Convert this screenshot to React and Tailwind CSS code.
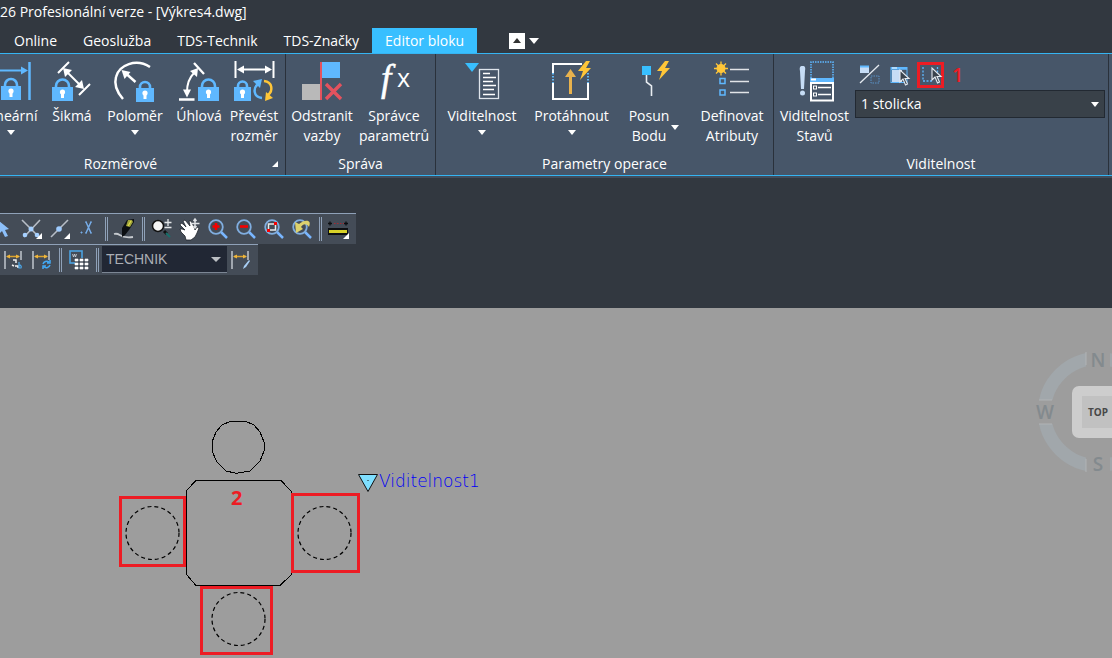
import React from "react";

const tabs = ["Online", "Geoslužba", "TDS-Technik", "TDS-Značky", "Editor bloku"];

function Lock({ x, y, w = 20 }) {
  const c = x + w / 2;
  const r = w / 2 - 4;
  return (
    <g>
      <path d={`M${c - r} ${y + 9}v-2a${r} ${r} 0 0 1 ${2 * r} 0v2`} fill="none" stroke="#5fb8ff" strokeWidth="2.6" />
      <rect x={x} y={y + 8} width={w} height="14" fill="#5fb8ff" />
      <circle cx={c} cy={y + 13} r="2.6" fill="#fff" />
      <rect x={c - 1.5} y={y + 14} width="3" height="5" fill="#fff" />
    </g>
  );
}

function Icon({ box, children }) {
  return (
    <svg viewBox={box} className="h-[42px] w-[42px] shrink-0 self-center overflow-visible" fill="none" aria-hidden="true">
      {children}
    </svg>
  );
}

const LinearIcon = () => (
  <Icon box="-10 61 42 42">
    <path d="M-10 70.500H22" stroke="#5fb8ff" strokeWidth="2" />
    <path d="M21 66.500v8l7-4z" fill="#5fb8ff" />
    <path d="M29.500 62v38" stroke="#5fb8ff" strokeWidth="2.500" />
    <Lock x={1} y={78} />
  </Icon>
);
const AlignedIcon = () => (
  <Icon box="51 61 42 42">
    <path d="M58 73 69 62M79 95l11-11" stroke="#fff" strokeWidth="2" />
    <path d="m66 71 15 15" stroke="#fff" strokeWidth="2" />
    <path d="m63 68 9 2-7 7zM84 89l-9-2 7-7z" fill="#fff" />
    <Lock x={52} y={79} w={21} />
  </Icon>
);
const RadiusIcon = () => (
  <Icon box="114 61 42 42">
    <path d="M150 67C136 58 119 65 116 77c-2 7 0 14 7 22" stroke="#fff" strokeWidth="2.500" />
    <path d="m135.500 82-9-8" stroke="#fff" strokeWidth="2.500" />
    <path d="m121.500 70 9 2-6 7z" fill="#fff" />
    <Lock x={136} y={80} w={18} />
  </Icon>
);
const AngularIcon = () => (
  <Icon box="178 61 42 42">
    <path d="m194 63 10 11M179 99.500h15.500" stroke="#fff" strokeWidth="2.300" />
    <path d="M187 92c0-8 2-14 7-19" stroke="#fff" strokeWidth="2" />
    <path d="M183 89.500h8l-4 8zM190 71l8-3-1 9z" fill="#fff" />
    <Lock x={198} y={79} w={21} />
  </Icon>
);
const ConvertIcon = () => (
  <Icon box="234 61 42 42">
    <path d="M236.500 61v17M274.500 61v17M241 69.500h29" stroke="#fff" strokeWidth="2" />
    <path d="M238 69.500l7-4v8zM273 69.500l-7-4v8z" fill="#fff" />
    <Lock x={235} y={79} w={17} />
    <path d="M263 98c-9-1-9-10-4-14" stroke="#5fb8ff" strokeWidth="2.500" />
    <path d="m254 81 9-2-2 9z" fill="#5fb8ff" />
    <path d="M265 81c9 1 9 10 4 14" stroke="#ffc638" strokeWidth="2.500" />
    <path d="m274 98-8 3 1-9z" fill="#ffc638" />
  </Icon>
);
const RemoveIcon = () => (
  <Icon box="301 61 42 42">
    <rect x="302" y="84" width="19" height="16" fill="#b9b9b9" />
    <rect x="322" y="62" width="18" height="16" fill="#5fb8ff" />
    <path d="M321 62v38" stroke="#e4525e" strokeWidth="2" />
    <path d="m326 84 15 15M341 84l-15 15" stroke="#e4525e" strokeWidth="3.400" />
  </Icon>
);
const FxIcon = () => (
  <Icon box="373 61 42 42">
    <text x="381" y="91" fontSize="37" fontStyle="italic" fill="#fff" stroke="#fff" strokeWidth=".5" fontFamily="Liberation Serif, serif">f</text>
    <text x="397" y="87" fontSize="25" fill="#fff" fontFamily="Open Sans, sans-serif">x</text>
  </Icon>
);
const VisibilityIcon = () => (
  <Icon box="461 61 42 42">
    <path d="M465 63h14l-7 9z" fill="#38bfff" />
    <rect x="479.500" y="69.500" width="19" height="29" stroke="#dfe5ec" strokeWidth="1.300" />
    <path d="M483 73.500h7M483 77.500h13M483 81.500h10M483 85.500h13M483 89.500h11M483 94.500h12" stroke="#fff" strokeWidth="1.500" />
  </Icon>
);
const Bolt = ({ x, y }) => (
  <path transform={`translate(${x} ${y})`} d="M8 0 0 10h5L2 19 13 7H8l4-7z" fill="#ffc638" />
);
const StretchIcon = () => (
  <Icon box="551 61 42 42">
    <path d="M553 73v-9h29M553 83v16h35v-16" stroke="#fff" strokeWidth="2" />
    <path d="M553 73v10M588 73v10" stroke="#63b8f5" strokeWidth="2" strokeDasharray="1.500 1.500" />
    <path d="M570.500 94V75" stroke="#e8b24d" strokeWidth="3" />
    <path d="m565 77 5.500-8 5.500 8z" fill="#e8b24d" />
    <Bolt x={578} y={61} />
  </Icon>
);
const MoveIcon = () => (
  <Icon box="628 61 42 42">
    <rect x="642" y="66" width="9" height="9" fill="#38bfff" />
    <path d="M646.500 75v7l5 4v10" stroke="#e9edf2" strokeWidth="1.600" />
    <Bolt x={657} y={61} />
  </Icon>
);
const AttributesIcon = () => (
  <Icon box="711 61 42 42">
    <path d="M721 61.500v14M714 68.500h14M716 63.500l10 10M726 63.500l-10 10" stroke="#ffc638" strokeWidth="1.300" />
    <circle cx="721" cy="68.500" r="4.500" fill="#ffc638" />
    <rect x="720" y="78.500" width="5" height="5" stroke="#5fb8ff" strokeWidth="1.500" />
    <rect x="720" y="90" width="5" height="5" stroke="#5fb8ff" strokeWidth="1.500" />
    <path d="M730 69.500h19M730 81.500h19M730 92.500h19" stroke="#e1e4e8" strokeWidth="1.500" />
  </Icon>
);
const StatesIcon = () => (
  <Icon box="794 61 42 42">
    <path d="M802.500 66c3 0 3 2 2.500 5l-1 18h-3l-1-18c-.5-3-.5-5 2.500-5z" fill="#c6dcf5" />
    <circle cx="802.500" cy="93" r="2.500" fill="#c6dcf5" />
    <path d="M811 78V62h22v16" stroke="#5fb8ff" strokeWidth="1.500" strokeDasharray="1.500 1" />
    <path d="M810 78h24v5h-24z" fill="#5fb8ff" />
    <path d="M811 79.500h5" stroke="#fff" strokeWidth="2" />
    <rect x="811" y="83" width="22" height="17.500" stroke="#fff" strokeWidth="2" />
    <path d="M818 87.500h13M818 94.500h13" stroke="#fff" strokeWidth="1.600" />
    <rect x="813.500" y="86" width="3" height="3" stroke="#fff" />
    <rect x="813.500" y="93" width="3" height="3" stroke="#fff" />
  </Icon>
);

const Caret = () => (
  <svg viewBox="0 0 8 5" className="h-[5px] w-2 shrink-0" aria-hidden="true">
    <path d="M0 0h8L4 5z" fill="#fff" />
  </svg>
);

function BigButton({ icon, lines, width, caret, sideCaret }) {
  return (
    <button type="button" className={`flex shrink-0 flex-col items-center whitespace-nowrap ${width}`}>
      {icon}
      <span className="relative mt-[3px] block leading-5">
        {lines.map((l) => (
          <span key={l} className="block text-center">{l}</span>
        ))}
        {sideCaret && <span className="absolute -right-[10px] bottom-4 flex"><Caret /></span>}
      </span>
      {caret && <span className="mt-1 flex"><Caret /></span>}
    </button>
  );
}

function Panel({ title, className, launcher, children }) {
  return (
    <section className={`flex shrink-0 flex-col border-r border-[#2a313b] pt-[7px] ${className}`}>
      <div className="flex flex-1">{children}</div>
      <div className="relative pb-px text-center leading-5">
        {title}
        {launcher && (
          <svg viewBox="0 0 6 6" className="absolute right-[7px] bottom-2 h-[6px] w-[6px]" aria-hidden="true">
            <path d="M6 0v6H0z" fill="#fff" />
          </svg>
        )}
      </div>
    </section>
  );
}

const Cursor = ({ x, y }) => (
  <path transform={`translate(${x} ${y})`} d="M0 0v12l3-3 2.500 6 2-1-2.500-5.500h4z" fill="#39424d" stroke="#e5eaf0" strokeWidth="1.100" />
);

function SmallIcon({ box, label, className = "", children }) {
  return (
    <button type="button" aria-label={label} className={`flex h-[26px] w-[27px] items-center justify-center ${className}`}>
      <svg viewBox={box} className="h-5 w-5 shrink-0 overflow-visible" fill="none" aria-hidden="true">{children}</svg>
    </button>
  );
}

function Ribbon() {
  return (
    <div className="flex overflow-hidden border-y border-[#35b4f2] bg-[#475669] shadow-[0_2px_0_#414d5c]">
      <Panel title="Rozměrové" launcher className="-ml-11 h-[121px] w-[330px]">
        <div className="flex flex-1 justify-end pr-2">
          <BigButton icon={<LinearIcon />} lines={["Lineární"]} width="w-[60px]" caret />
          <BigButton icon={<AlignedIcon />} lines={["Šikmá"]} width="w-[62px]" />
          <BigButton icon={<RadiusIcon />} lines={["Poloměr"]} width="w-16" caret />
          <BigButton icon={<AngularIcon />} lines={["Úhlová"]} width="w-16" />
          <BigButton icon={<ConvertIcon />} lines={["Převést", "rozměr"]} width="w-[46px]" />
        </div>
      </Panel>
      <Panel title="Správa" className="w-[150px]">
        <BigButton icon={<RemoveIcon />} lines={["Odstranit", "vazby"]} width="w-[72px]" />
        <BigButton icon={<FxIcon />} lines={["Správce", "parametrů"]} width="w-[72px]" />
      </Panel>
      <Panel title="Parametry operace" className="w-[338px]">
        <BigButton icon={<VisibilityIcon />} lines={["Viditelnost"]} width="w-[92px]" caret />
        <BigButton icon={<StretchIcon />} lines={["Protáhnout"]} width="w-[87px]" caret />
        <BigButton icon={<MoveIcon />} lines={["Posun", "Bodu"]} width="w-[68px]" sideCaret />
        <div className="-mt-[3px] mb-[6px] ml-[7px] w-px bg-[#2a313b]" />
        <BigButton icon={<AttributesIcon />} lines={["Definovat", "Atributy"]} width="w-[84px]" />
      </Panel>
      <Panel title="Viditelnost" className="mr-[3px] min-w-[300px] grow">
        <BigButton icon={<StatesIcon />} lines={["Viditelnost", "Stavů"]} width="w-[81px]" />
        <div className="flex flex-1 flex-col gap-[2px] pt-px pr-[3px]">
          <div className="flex items-center gap-1">
            <SmallIcon box="858 63 20 20" label="Režim viditelnosti">
              <rect x="859" y="64" width="9" height="7" fill="#c6dcf5" />
              <path d="M859 64.500h9" stroke="#5fb8ff" strokeWidth="2" />
              <path d="m859 81 19-18" stroke="#e5eaf0" strokeWidth="1.300" />
              <rect x="870" y="74" width="8" height="7" stroke="#5b92c8" strokeDasharray="1.500 1" />
            </SmallIcon>
            <SmallIcon box="890 63 20 20" label="Zviditelnit">
              <rect x="891" y="65.500" width="16" height="15" fill="#475669" stroke="#5fb8ff" />
              <path d="M892 68h10v12h-10z" fill="#c6dcf5" />
              <path d="M891 66.500h16" stroke="#5fb8ff" strokeWidth="2.500" />
              <path d="M892 66h5" stroke="#fff" />
              <Cursor x={900} y={68} />
            </SmallIcon>
            <SmallIcon box="920 65 20 20" label="Zneviditelnit" className="border-[3px] border-[#ed1c24]">
              <path d="M922 67v14h10M936.500 67v12" stroke="#5fb8ff" strokeWidth="1.300" strokeDasharray="2 1.500" />
              <Cursor x={931} y={68} />
            </SmallIcon>
            <span className="pl-1 text-xl font-semibold leading-5 text-[#ed1c24]">1</span>
          </div>
          <label className="relative flex">
            <select aria-label="Stav viditelnosti" className="h-7 w-full appearance-none rounded-none border border-[#222932] bg-[#394149] px-[5px] text-sm text-white">
              <option>1 stolicka</option>
            </select>
            <span className="pointer-events-none absolute top-3 right-[6px] flex"><Caret /></span>
          </label>
        </div>
      </Panel>
    </div>
  );
}

function Tool({ label, children }) {
  return (
    <button type="button" aria-label={label} className="flex h-[30px] w-7 shrink-0 items-center justify-center">
      <svg viewBox="0 0 20 20" className="h-5 w-5 overflow-visible" fill="none" aria-hidden="true">{children}</svg>
    </button>
  );
}
const Grip = () => (
  <div className="flex w-[9px] shrink-0 justify-center py-[3px]"><div className="w-[3px] border-x border-[#8fa1b8]" /></div>
);
const Lens = ({ children }) => (
  <>
    <path d="m13 13 6 6" stroke="#79b6ff" strokeWidth="2.500" />
    <circle cx="8" cy="8" r="6.800" stroke="#80aee0" strokeWidth="1.800" />
    {children}
  </>
);
const Dim = ({ children }) => (
  <>
    <path d="M1 1v18M17 1v9" stroke="#b8bec6" strokeWidth="1.600" />
    <path d="M3 6.500h12" stroke="#dba32e" strokeWidth="1.500" />
    <path d="m2 6.500 4-2v4zM16 6.500l-4-2v4z" fill="#f0b63b" />
    {children}
  </>
);
const Corner = () => <path d="M20 14v6h-6z" fill="#fff" />;

function Toolbars() {
  return (
    <div className="flex flex-col items-start pt-[37px] pb-[33px]">
      <div className="flex overflow-hidden border-t border-[#8fa1b8] bg-[#444c57] pr-[3px]">
        <div className="-ml-[10px] flex">
          <Tool label="Výběr"><path d="m5 2 10 8-4 1 3 6-3 1-3-6-3 3z" fill="#8dc0fa" /></Tool>
        </div>
        <Tool label="Průsečík">
          <path d="m0 1 17 17M18 1 2 18" stroke="#b7bdc6" strokeWidth="1.600" />
          <circle cx="9" cy="10" r="2.500" fill="#a6d0ff" /><circle cx="3" cy="16" r="2.300" fill="#a6d0ff" /><circle cx="15" cy="16" r="2.300" fill="#a6d0ff" /><Corner />
        </Tool>
        <Tool label="Střed"><path d="M1 18 18 1" stroke="#b7bdc6" strokeWidth="1.600" /><circle cx="9" cy="10" r="2.800" fill="#9ecbff" /><Corner /></Tool>
        <Tool label="Filtr X"><path d="m8 3 5 11M13 3 8 14" stroke="#77ade8" strokeWidth="1.500" /><path d="M3 13h1v1H3zM7 3h2M12 3h2M7 14h2M12 14h2" fill="#77ade8" stroke="#77ade8" /></Tool>
        <Grip />
        <Tool label="Kreslit">
          <path d="M-1 15c7-2 4 5 19 3" stroke="#c5c9ce" strokeWidth="1.800" />
          <path d="m12 1 7-1v3l-5 8-4 5-3 2V9z" fill="#0c0f12" />
          <path d="m13 1 4 0 1 2-3 5-4-1z" fill="#9da33c" />
          <path d="m13 7 3-5" stroke="#e6dd4a" strokeWidth="1.200" />
        </Tool>
        <Grip />
        <Tool label="Zoom"><path d="m12 12 3 3" stroke="#111" strokeWidth="3" /><path d="m14 14 4 4" stroke="#176f6b" strokeWidth="2" /><circle cx="6" cy="7" r="5.500" fill="#f5f5f5" stroke="#111" strokeWidth="1.500" /><path d="M16 0v7M12.500 3.500h7M12.500 8.500h7" stroke="#e3e5e8" strokeWidth="1.300" /></Tool>
        <Tool label="Posun">
          <path d="m5 17-4-4-1-3 2 0 3 1L0 6l1-2 2 1 3 3-3-6 2-1 5 6-1-5 2 0 3 6 1 3 2-3 2 1-2 5-2 4-4 3-5 0z" fill="#fff" stroke="#20252b" strokeWidth=".8" />
          <path d="M15 0v9M10.500 4.500h9M13.500 2l1.500-2 1.500 2M13.500 7l1.500 2 1.500-2" stroke="#dfe2e5" strokeWidth="1.400" />
        </Tool>
        <Tool label="Přiblížit"><Lens><path d="M4.500 7.500h7M8 4v7" stroke="#f50000" strokeWidth="2.600" /></Lens></Tool>
        <Tool label="Oddálit"><Lens><path d="M4 7.500h8" stroke="#f50000" strokeWidth="2.600" /></Lens></Tool>
        <Tool label="Zoom okno"><Lens><rect x="4.500" y="5" width="7" height="6" stroke="#e8eaec" strokeWidth="1.500" /><path d="M10 3h3v3h-3zM3 10h3v3H3z" fill="#f50000" /></Lens></Tool>
        <Tool label="Zoom předchozí"><Lens><path d="m3 3 1 11 7-4-2-2c3-4 6-3 8 0 2-5 0-7-4-6-3 0-4 2-6 3z" fill="#ddd26d" /></Lens></Tool>
        <Grip />
        <Tool label="Měřit"><path d="M-1 4.500h4M15 4.500h4M1 2.500v4M17 2.500v4" stroke="#0b0d10" strokeWidth="1.300" /><path d="M5 4.500h10" stroke="#a52a32" strokeDasharray="1.500 1.500" /><rect x="-1" y="9" width="20" height="7" fill="#0e1012" /><rect x="0" y="11" width="18" height="3" fill="#d8d228" /><Corner /></Tool>
      </div>
      <div className="flex border-t border-[#8fa1b8] bg-[#444c57] pr-[3px]">
        <Tool label="Upravit text kóty"><Dim><path d="M9 10h3v3M8 15l2 1M11 16h3v2" stroke="#f0f0f0" strokeWidth="1.500" /><path d="M15 12v6h2a2 2 0 0 0-2-3" stroke="#4aa7ea" strokeWidth="1.200" /></Dim></Tool>
        <Tool label="Aktualizovat kótu"><Dim><path d="M11 14a4 4 0 0 1 6-2M18 15a4 4 0 0 1-6 2M18 10v3h-3M11 19v-3h3" stroke="#42a9f5" strokeWidth="1.500" /></Dim></Tool>
        <Grip />
        <Tool label="Tabulka"><rect x="1" y="1" width="12" height="12" stroke="#4ca2e0" strokeWidth="1.600" /><path d="m3.500 4 1 3 1-3 1 3 1-3" stroke="#cfd5dd" strokeWidth=".8" /><path d="M6 8h13v11H6z" fill="#444c57" /><path d="M6 9h3v2H6zM11 9h3v2h-3zM16 9h3v2h-3zM6 13h3v2H6zM11 13h3v2h-3zM16 13h3v2h-3zM6 17h3v2H6zM11 17h3v2h-3zM16 17h3v2h-3z" fill="#fff" stroke="#fff" strokeWidth=".6" /></Tool>
        <Grip />
        <label className="relative flex pt-px pb-[2px]">
          <select aria-label="Kótovací styl" className="w-[125px] appearance-none rounded-none border-b border-[#7c8694] bg-[#212734] px-1 font-['Liberation_Sans',sans-serif] text-sm text-[#aaaeb4]">
            <option>TECHNIK</option>
          </select>
          <svg viewBox="0 0 10 5" className="pointer-events-none absolute top-3 right-[6px] h-[5px] w-[10px]" aria-hidden="true"><path d="M0 0h10L5 5z" fill="#bcbfc3" /></svg>
        </label>
        <Tool label="Styl kóty"><Dim><path d="m18 10-5 6-1 3 3-2 4-6z" fill="#a8cff5" /></Dim></Tool>
      </div>
    </div>
  );
}

function Canvas() {
  return (
    <main className="relative min-h-[350px] flex-1 overflow-hidden bg-[#9d9d9d]">
      <svg viewBox="0 308 500 350" className="absolute top-0 left-0 h-[350px] w-[500px]" fill="none">
        <g stroke="#000" shapeRendering="crispEdges">
          <path d="M231 421h14l9 4 6 7 4 10v9l-4 10-10 10-12 2h-3l-9-2-9-9-5-11v-9l4-10 6-7z" />
          <path d="M196 480.500h85l10.500 11v83l-11.500 11h-84l-9.500-11v-84z" />
        </g>
        <g stroke="#000" strokeWidth="1.200" strokeDasharray="4 3">
          <circle cx="152.500" cy="533" r="26.500" />
          <circle cx="324.500" cy="533" r="26.500" />
          <circle cx="238.500" cy="619" r="26.500" />
        </g>
        <g stroke="#ed1c24" strokeWidth="3">
          <rect x="120.500" y="497.500" width="64" height="68" />
          <rect x="292.500" y="494.500" width="66" height="77" />
          <rect x="201.500" y="587.500" width="70" height="66" />
        </g>
        <path d="M358.500 474.500h19l-9.500 17z" fill="#7fdfff" stroke="#111" />
        <path d="M367.500 480h1v1h-1z" fill="#111" />
        <text x="379" y="487" fontSize="17" fontWeight="200" fill="#0000f5" fontFamily="DejaVu Sans, sans-serif">Viditelnost1</text>
        <text x="231" y="505" fontSize="20" fontWeight="700" fill="#ed1c24" fontFamily="Open Sans, sans-serif">2</text>
      </svg>
      <svg viewBox="1012 338 100 150" className="absolute top-[30px] right-0 h-[150px] w-[100px]" fill="none">
        <circle cx="1098" cy="412" r="53.500" stroke="#a1a7ab" strokeWidth="13" />
        <path d="M1086 345h24v40h-24zM1086 439h24v40h-24zM1030 400h30v24h-30z" fill="#9d9d9d" />
        <path d="M1039 400h13M1039 424h13M1086 352v13M1086 459v13" stroke="#b0b3b5" />
        <g fill="#838a8e" fontSize="19" fontWeight="600" fontFamily="Open Sans, sans-serif" textAnchor="middle">
          <text x="1098" y="367">N</text>
          <text x="1045" y="419">W</text>
          <text x="1098" y="471">S</text>
        </g>
        <rect x="1072" y="386" width="53" height="52" rx="7" fill="#cdcdcd" />
        <rect x="1082" y="396" width="40" height="32" fill="#c1c1c1" />
        <text x="1088" y="416" fontSize="10" fontWeight="700" fill="#484848" fontFamily="Open Sans, sans-serif">TOP</text>
      </svg>
    </main>
  );
}

export default function App() {
  return (
    <div className="flex min-h-screen flex-col overflow-hidden bg-[#323840] font-['Open_Sans','Noto_Sans',sans-serif] text-sm text-white">
      <header className="h-7 whitespace-nowrap leading-6">26 Profesionální verze - [Výkres4.dwg]</header>
      <nav className="flex h-[25px] items-stretch pl-px whitespace-nowrap">
        {tabs.map((t) => (
          <button key={t} type="button" className={`px-[13px] pt-px leading-6 ${t === "Editor bloku" ? "bg-[#38bfff]" : ""}`}>{t}</button>
        ))}
        <button type="button" aria-label="Minimalizovat pás karet" className="ml-8 flex h-4 w-4 items-center justify-center self-center bg-white">
          <svg viewBox="0 0 8 5" className="h-[5px] w-2" aria-hidden="true"><path d="M0 5h8L4 0z" fill="#333" /></svg>
        </button>
        <button type="button" aria-label="Možnosti pásu karet" className="ml-1 self-center">
          <svg viewBox="0 0 10 6" className="h-[6px] w-[10px]" aria-hidden="true"><path d="M0 0h10L5 6z" fill="#fff" /></svg>
        </button>
      </nav>
      <Ribbon />
      <Toolbars />
      <Canvas />
    </div>
  );
}
